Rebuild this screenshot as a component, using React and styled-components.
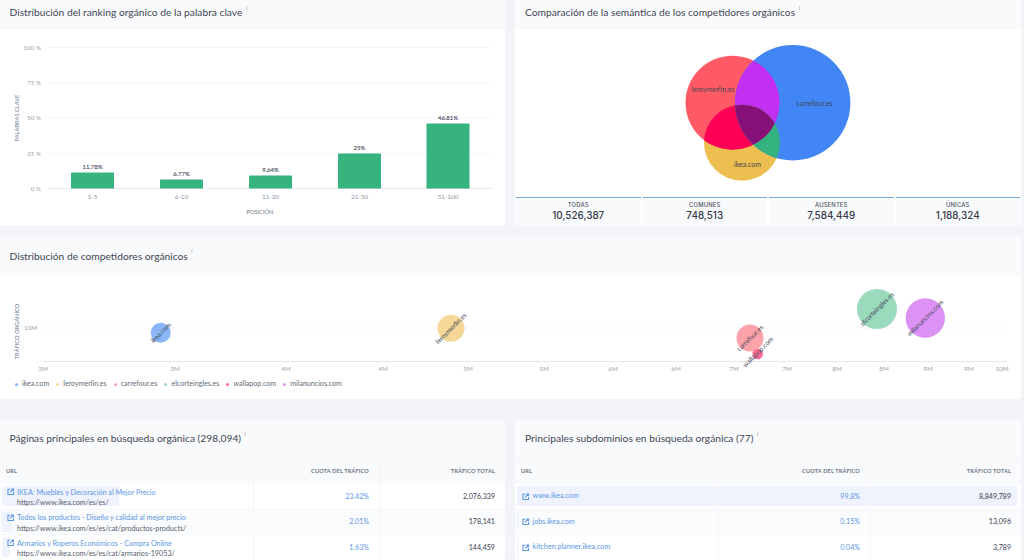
import React from "react";
import styled, { createGlobalStyle } from "styled-components";

const Global = createGlobalStyle`
  html, body { margin: 0; padding: 0; height: 560px; overflow: hidden; background: #f2f4f8; }
  * { box-sizing: border-box; }
  body { font-family: Lato, "Liberation Sans", sans-serif; }
`;

const Page = styled.div`
  width: 1021px;
  display: grid;
  grid-template-columns: 505px 506px;
  column-gap: 10px;
  grid-template-rows: 226px 162px 150px;
  row-gap: 11px;
  & > :nth-child(3) { grid-column: 1 / 3; }
  & > :nth-child(4) { margin-top: 10px; }
  & > :nth-child(5) { margin-top: 10px; }
`;

const Card = styled.section`
  background: #fff;
  border-radius: 0 0 4px 4px;
  display: flex;
  flex-direction: column;
  overflow: hidden;
  min-width: 0;
`;

const Head = styled.header`
  height: ${p => p.$h}px;
  flex: none;
  background: #f9fafc;
  display: flex;
  align-items: ${p => p.$top ? "flex-start" : "center"};
  padding: ${p => p.$top ? "5.5px" : "0"} 10px 0 ${p => p.$pad || 9.5}px;
  color: #3f4653;
  font-size: 10.25px;
  line-height: 13px;
  font-weight: 400;
  white-space: nowrap;
`;

const Info = styled.i`
  font-size: 5.5px;
  line-height: 1;
  color: #8a93a0;
  margin-left: 3.5px;
  align-self: flex-start;
  margin-top: ${p => p.$mt || 0}px;
`;

const Chart = styled.svg`
  display: block;
  flex: ${p => p.$h ? "none" : 1};
  width: 100%;
  height: ${p => p.$h ? `${p.$h}px` : "auto"};
  min-height: 0;
`;

const Stats = styled.div`
  display: grid;
  grid-template-columns: repeat(4, 1fr);
  gap: 2px;
  padding: 0 1px;
  height: 29px;
  flex: none;
`;

const Stat = styled.div`
  background: #f9fafc;
  border-top: 1px solid #7aa9de;
  display: flex;
  flex-direction: column;
  align-items: center;
  padding-top: 3px;
`;

const StatLabel = styled.span`
  font-family: Inter, "Liberation Sans", sans-serif;
  font-size: 5.8px;
  line-height: 7px;
  letter-spacing: 0.2px;
  color: #4b5563;
  font-weight: 500;
`;

const StatValue = styled.span`
  font-family: Inter, "Liberation Sans", sans-serif;
  font-size: 9.9px;
  line-height: 14px;
  color: #333b48;
  font-weight: 500;
`;

const Legend = styled.ul`
  list-style: none;
  margin: 0;
  padding: 6px 0 0 15px;
  height: 27px;
  flex: none;
  display: flex;
  align-items: flex-start;
  gap: 7px;
  font-size: 7.1px;
  line-height: 12px;
  color: #626c78;
`;

const LegendItem = styled.li`
  display: flex;
  align-items: center;
  gap: 4px;
  &::before {
    content: "";
    width: 3px;
    height: 3px;
    border-radius: 50%;
    background: ${p => p.$c};
  }
`;

const Grid = styled.div`
  display: grid;
  grid-template-columns: ${p => p.$cols};
`;

const HeadRow = styled(Grid)`
  height: 27px;
  background: #f9fafc;
  border-top: 1px solid #f4f6f9;
  flex: none;
`;

const Th = styled.div`
  font-size: 5.5px;
  font-weight: 700;
  letter-spacing: 0.2px;
  color: #6d7784;
  display: flex;
  align-items: center;
  justify-content: ${p => p.$right ? "flex-end" : "flex-start"};
  padding: 0 10px 0 ${p => p.$first ? 6 : 0}px;
  border-left: ${p => p.$first ? "0" : "1px solid #f3f5f9"};
`;

const Row = styled(Grid)`
  position: relative;
  height: 25.5px;
  flex: none;
  background: ${p => p.$alt ? "#fafbfd" : "#fff"};
  border-bottom: 1px solid #f5f6fa;
`;

const Bar = styled.div`
  position: absolute;
  left: 2px;
  top: 2px;
  bottom: 2.5px;
  background: #eff3fd;
`;

const Cell = styled.div`
  position: relative;
  font-size: 7.1px;
  display: flex;
  align-items: center;
  justify-content: flex-end;
  padding-right: 10px;
  color: ${p => p.$blue ? "#5b97e4" : "#3a414c"};
  border-left: 1px solid #f3f5f9;
`;

const UrlCell = styled.div`
  position: relative;
  display: flex;
  align-items: ${p => p.$single ? "center" : "flex-start"};
  padding: ${p => p.$single ? "0" : "3.5px"} 0 0 ${p => p.$single ? 7 : 6.5}px;
  gap: 3px;
  min-width: 0;
  color: #5b97e4;
`;

const Lines = styled.div`
  display: flex;
  flex-direction: column;
  font-size: 7.2px;
  line-height: 10.5px;
  white-space: nowrap;
`;

const LinkTitle = styled.span`
  color: #5b97e4;
`;

const LinkUrl = styled.span`
  color: #56626c;
`;

const LinkIcon = () => (
  <svg width="7.5" height="7.5" viewBox="0 0 24 24" fill="none" stroke="currentColor" strokeWidth="3.4" style={{ flex: "none", marginTop: 0.5 }}>
    <path d="M21 13v8H3V4h8" />
    <path d="M10 14 21 3M14 3h7v7" />
  </svg>
);

const bars = [
  { x: 71, top: 172.5, v: "11.78%", l: "1-5" },
  { x: 160, top: 179.5, v: "6.77%", l: "6-10" },
  { x: 249, top: 175.5, v: "9.64%", l: "11-20" },
  { x: 338, top: 153.5, v: "25%", l: "21-50" },
  { x: 426.5, top: 123.5, v: "46.81%", l: "51-100" },
];
const ticks = [["100 %", 47.5], ["75 %", 83], ["50 %", 118], ["25 %", 153.5], ["0 %", 188.5]];

const BarChart = () => (
  <Chart viewBox="0 30 505 196">
    {ticks.map(([t, y], i) => (
      <g key={t}>
        <line x1="48" x2="492" y1={y} y2={y} stroke={i === 4 ? "#e3e8f4" : "#f4f5f9"} />
        <text x="41" y={y + 2} fontSize="6.3" fill="#98a2ad" textAnchor="end">{t}</text>
      </g>
    ))}
    <text transform="translate(19 118) rotate(-90)" fontSize="5.7" fill="#6d7784" textAnchor="middle">PALABRAS CLAVE</text>
    {bars.map(b => (
      <g key={b.l}>
        <path d={`M${b.x} 188.5V${b.top + 1}q0-1 1-1h41q1 0 1 1V188.5z`} fill="#36b37e" />
        <text x={b.x + 21.5} y={b.top - 4} fontSize="6" fill="#3f4653" stroke="#3f4653" strokeWidth="0.1" textAnchor="middle">{b.v}</text>
        <text x={b.x + 21.5} y="199" fontSize="6.3" fill="#8b95a1" textAnchor="middle">{b.l}</text>
      </g>
    ))}
    <text x="260" y="213.5" fontSize="5.7" fill="#6d7784" textAnchor="middle">POSICIÓN</text>
  </Chart>
);

const Venn = () => (
  <Chart viewBox="515 30 506 167">
    <defs>
      <clipPath id="r"><circle cx="732.5" cy="102.7" r="47" /></clipPath>
      <clipPath id="b"><circle cx="792.7" cy="102.7" r="57.7" /></clipPath>
    </defs>
    <circle cx="742" cy="142.7" r="38" fill="#ecbf50" />
    <circle cx="732.5" cy="102.7" r="47" fill="#ff5a66" />
    <circle cx="792.7" cy="102.7" r="57.7" fill="#4285f4" />
    <circle cx="792.7" cy="102.7" r="57.7" fill="#c22ff0" clipPath="url(#r)" />
    <circle cx="742" cy="142.7" r="38" fill="#ff0058" clipPath="url(#r)" />
    <circle cx="742" cy="142.7" r="38" fill="#34b27f" clipPath="url(#b)" />
    <g clipPath="url(#r)"><circle cx="742" cy="142.7" r="38" fill="#871078" clipPath="url(#b)" /></g>
    <g fontSize="7" fill="#3f4653" textAnchor="middle">
      <text x="713" y="91.5">leroymerlin.es</text>
      <text x="814.5" y="105.5">carrefour.es</text>
      <text x="747.5" y="166.5">ikea.com</text>
    </g>
  </Chart>
);

const xTicks = [["3M", 43], ["3M", 175], ["4M", 286], ["4M", 383], ["5M", 468], ["5M", 544], ["6M", 613], ["6M", 676], ["7M", 734], ["7M", 787], ["8M", 837], ["8M", 884], ["9M", 928], ["9M", 969], ["10M", 1002]];
const bubbles = [
  { n: "ikea.com", x: 160.7, y: 332.7, r: 10, c: "#8ab6f8" },
  { n: "leroymerlin.es", x: 451, y: 328.3, r: 13.5, c: "#f5d798" },
  { n: "carrefour.es", x: 750, y: 338, r: 13.5, c: "#ffa3aa" },
  { n: "wallapop.com", x: 757.7, y: 354, r: 5.3, c: "#ff6d96", lx: 758, ly: 352 },
  { n: "elcorteingles.es", x: 877, y: 309, r: 20, c: "#9bdabd" },
  { n: "milanuncios.com", x: 925.3, y: 318, r: 19.7, c: "#dc92f5" },
];

const Scatter = () => (
  <Chart $h={97} viewBox="0 275 1021 97">
    <line x1="43" x2="1008" y1="328" y2="328" stroke="#f4f5f9" />
    <line x1="43" x2="1008" y1="361.5" y2="361.5" stroke="#e3e8f0" />
    <text x="24" y="330" fontSize="6.3" fill="#98a2ad">10M</text>
    <text transform="translate(19 331.5) rotate(-90)" fontSize="5.7" fill="#6d7784" textAnchor="middle">TRÁFICO ORGÁNICO</text>
    {xTicks.map(([t, x], i) => (
      <text key={i} x={x} y="371" fontSize="6.3" fill="#98a2ad" textAnchor="middle">{t}</text>
    ))}
    {bubbles.map(b => <circle key={b.n} cx={b.x} cy={b.y} r={b.r} fill={b.c} />)}
    {bubbles.map(b => (
      <text key={b.n} transform={`translate(${b.lx ?? b.x} ${b.ly ?? b.y}) rotate(-45)`} y="2.3" fontSize="6.6" fill="#3f4653" textAnchor="middle">{b.n}</text>
    ))}
  </Chart>
);

const pages = [
  { t: "IKEA: Muebles y Decoración al Mejor Precio", u: "https://www.ikea.com/es/es/", s: 23.42, v: "23.42%", n: "2,076,339" },
  { t: "Todos los productos - Diseño y calidad al mejor precio", u: "https://www.ikea.com/es/es/cat/productos-products/", s: 2.01, v: "2.01%", n: "178,141" },
  { t: "Armarios y Roperos Económicos - Compra Online", u: "https://www.ikea.com/es/es/cat/armarios-19053/", s: 1.63, v: "1.63%", n: "144,459" },
];
const subs = [
  { t: "www.ikea.com", s: 99.8, v: "99.8%", n: "8,849,789" },
  { t: "jobs.ikea.com", s: 0.15, v: "0.15%", n: "13,096" },
  { t: "kitchen.planner.ikea.com", s: 0.04, v: "0.04%", n: "3,789" },
];

const TableHead = ({ cols }) => (
  <HeadRow $cols={cols}>
    <Th $first>URL</Th>
    <Th $right>CUOTA DEL TRÁFICO</Th>
    <Th $right>TRÁFICO TOTAL</Th>
  </HeadRow>
);

const stats = [["TODAS", "10,526,387"], ["COMUNES", "748,513"], ["AUSENTES", "7,584,449"], ["ÚNICAS", "1,188,324"]];
const legend = [["ikea.com", "#8ab6f8"], ["leroymerlin.es", "#f5d798"], ["carrefour.es", "#ffa3aa"], ["elcorteingles.es", "#9bdabd"], ["wallapop.com", "#ff6d96"], ["milanuncios.com", "#dc92f5"]];

const colsL = "253px 126px 126px";
const colsR = "203px 152px 151px";

export default function App() {
  return (
    <>
      <Global />
      <Page>
        <Card>
          <Head $h={30} $top>Distribución del ranking orgánico de la palabra clave<Info>i</Info></Head>
          <BarChart />
        </Card>
        <Card>
          <Head $h={30} $top $pad={10}>Comparación de la semántica de los competidores orgánicos<Info>i</Info></Head>
          <Venn />
          <Stats>
            {stats.map(([l, v]) => (
              <Stat key={l}><StatLabel>{l}</StatLabel><StatValue>{v}</StatValue></Stat>
            ))}
          </Stats>
        </Card>
        <Card>
          <Head $h={38}>Distribución de competidores orgánicos<Info $mt={12}>i</Info></Head>
          <Scatter />
          <Legend>
            {legend.map(([n, c]) => <LegendItem key={n} $c={c}>{n}</LegendItem>)}
          </Legend>
        </Card>
        <Card>
          <Head $h={37}>Páginas principales en búsqueda orgánica (298,094)<Info $mt={12}>i</Info></Head>
          <TableHead cols={colsL} />
          {pages.map((p, i) => (
            <Row key={p.u} $cols={colsL} $alt={i === 1}>
              <Bar style={{ width: `${p.s * 5.01}px` }} />
              <UrlCell>
                <LinkIcon />
                <Lines>
                  <LinkTitle>{p.t}</LinkTitle>
                  <LinkUrl>{p.u}</LinkUrl>
                </Lines>
              </UrlCell>
              <Cell $blue>{p.v}</Cell>
              <Cell>{p.n}</Cell>
            </Row>
          ))}
        </Card>
        <Card>
          <Head $h={37} $pad={10}>Principales subdominios en búsqueda orgánica (77)<Info $mt={12}>i</Info></Head>
          <TableHead cols={colsR} />
          {subs.map((p, i) => (
            <Row key={p.t} $cols={colsR} $alt={i === 1}>
              <Bar style={{ width: `${p.s * 5.01}px` }} />
              <UrlCell $single>
                <LinkIcon />
                <Lines><LinkTitle>{p.t}</LinkTitle></Lines>
              </UrlCell>
              <Cell $blue>{p.v}</Cell>
              <Cell>{p.n}</Cell>
            </Row>
          ))}
        </Card>
      </Page>
    </>
  );
}
